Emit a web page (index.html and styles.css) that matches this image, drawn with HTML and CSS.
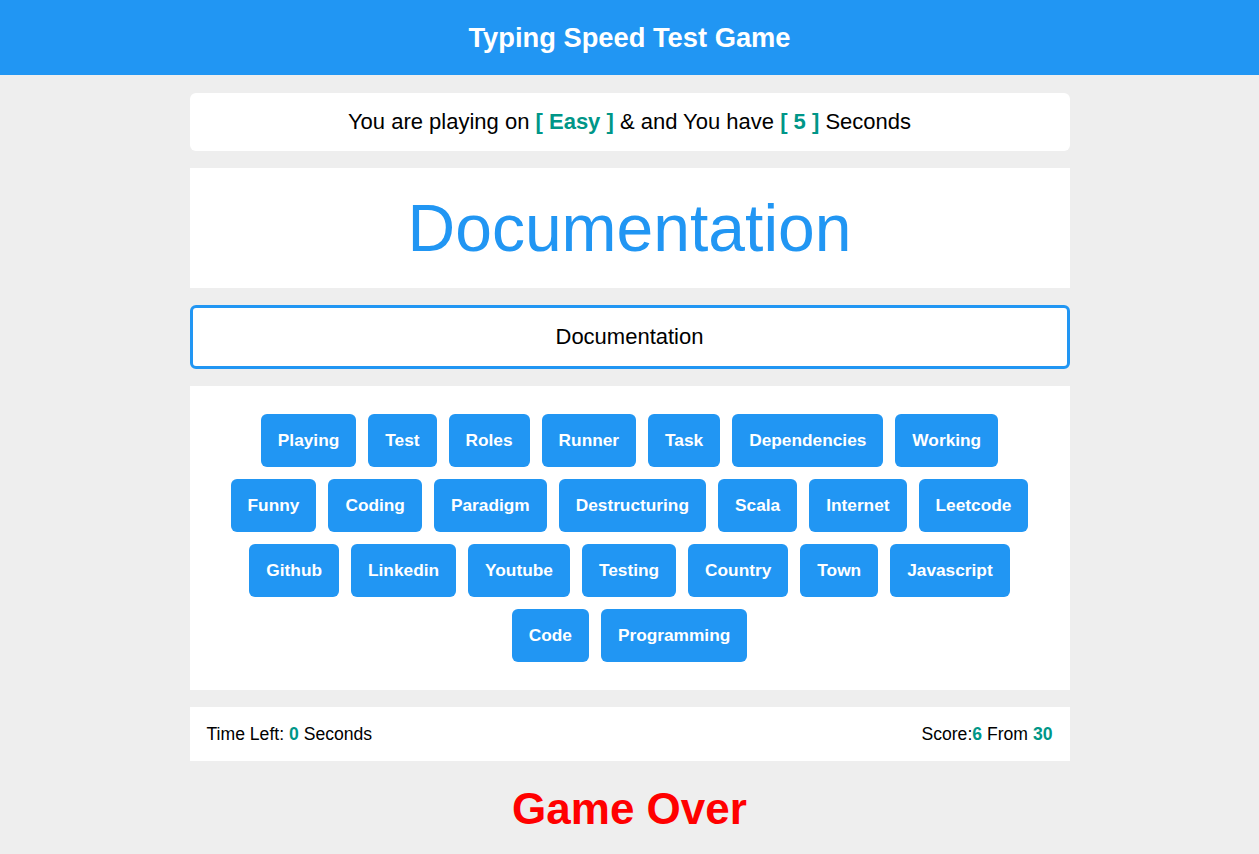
FILE: index.html
```html
<!DOCTYPE html>
<html>
<head>
<meta charset="utf-8">
<link rel="stylesheet" href="styles.css">
</head>
<body>
<header class="top">Typing Speed Test Game</header>
<main class="game">
  <div class="message">You are playing on <span class="hl">[ Easy ]</span> &amp; and You have <span class="hl">[ 5 ]</span> Seconds</div>
  <div class="word">Documentation</div>
  <input class="input" type="text" value="Documentation">
  <div class="upcoming">
    <span class="chip">Playing</span><span class="chip">Test</span><span class="chip">Roles</span><span class="chip">Runner</span><span class="chip">Task</span><span class="chip">Dependencies</span><span class="chip">Working</span><span class="chip">Funny</span><span class="chip">Coding</span><span class="chip">Paradigm</span><span class="chip">Destructuring</span><span class="chip">Scala</span><span class="chip">Internet</span><span class="chip">Leetcode</span><span class="chip">Github</span><span class="chip">Linkedin</span><span class="chip">Youtube</span><span class="chip">Testing</span><span class="chip">Country</span><span class="chip">Town</span><span class="chip">Javascript</span><span class="chip">Code</span><span class="chip">Programming</span>
  </div>
  <div class="control">
    <div>Time Left: <span class="num">0</span> Seconds</div>
    <div>Score:<span class="num">6</span> From <span class="num">30</span></div>
  </div>
  <div class="finish">Game Over</div>
</main>
</body>
</html>
```
FILE: styles.css
```css
* { box-sizing: border-box; }
body {
  margin: 0;
  background: #eeeeee;
  font-family: "Liberation Sans", Arial, sans-serif;
  color: #000;
}
.top {
  background: #2196f3;
  color: #fff;
  font-weight: bold;
  font-size: 27.3px;
  height: 75px;
  line-height: 75px;
  text-align: center;
}
.game {
  width: 880px;
  margin: 18px auto 0;
  display: flex;
  flex-direction: column;
  gap: 17px;
}
.message {
  background: #fff;
  border-radius: 6px;
  height: 58px;
  line-height: 58px;
  text-align: center;
  font-size: 22px;
}
.hl { color: #009688; font-weight: bold; }
.word {
  background: #fff;
  height: 120px;
  line-height: 120px;
  text-align: center;
  color: #2196f3;
  font-size: 66px;
}
.input {
  display: block;
  width: 100%;
  height: 64px;
  border: 3px solid #2196f3;
  border-radius: 6px;
  background: #fff;
  font-family: "Liberation Sans", Arial, sans-serif;
  font-size: 22px;
  text-align: center;
  color: #000;
  outline: none;
  margin: 0;
}
.upcoming {
  background: #fff;
  padding: 22px 20px;
  display: flex;
  flex-wrap: wrap;
  justify-content: center;
}
.chip {
  background: #2196f3;
  color: #fff;
  font-weight: bold;
  font-size: 17.3px;
  padding: 16px 17px;
  border-radius: 6px;
  margin: 6px;
  line-height: 21px;
}
.control {
  background: #fff;
  height: 54px;
  padding: 0 17px;
  display: flex;
  align-items: center;
  justify-content: space-between;
  font-size: 17.6px;
}
.num { color: #009688; font-weight: bold; }
.finish {
  color: #ff0000;
  font-weight: bold;
  font-size: 44px;
  text-align: center;
  margin-top: 6px;
}
```
